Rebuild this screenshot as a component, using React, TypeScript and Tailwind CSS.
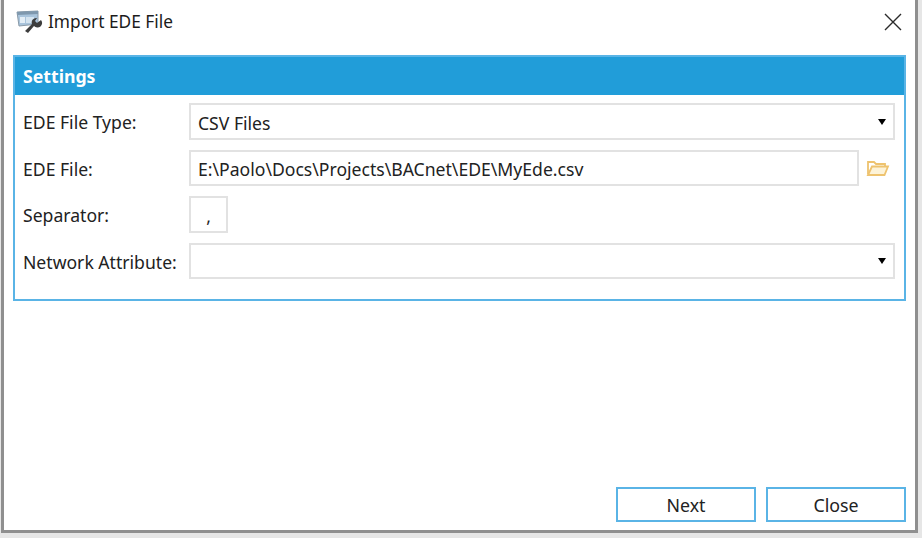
const font = "font-['Noto_Sans','Open_Sans',sans-serif]"

function WindowIcon() {
  return (
    <svg width="28" height="24" viewBox="0 0 28 24" className="shrink-0">
      <path d="M2 2 L23 1 L23 14 L4 16 Z" fill="#a9c4dc" stroke="#8a9aa8" />
      <path d="M2 2 L23 1 L23 4 L2.5 5 Z" fill="#7f98ae" />
      <rect x="5" y="7" width="5" height="6" fill="#e4eef6" />
      <rect x="11" y="7" width="8" height="6" fill="#d5e4f0" />
      <path d="M10 21 L17 14 A4.5 4.5 0 0 1 22 8 L20 11 L22 13 L26 10 A4.5 4.5 0 0 1 19 16 L13 23 Z" fill="#3d3d3d" />
    </svg>
  )
}

function CloseIcon() {
  return (
    <svg width="18" height="18" viewBox="0 0 18 18" className="shrink-0">
      <path d="M1 1 L17 17 M17 1 L1 17" stroke="#2b2b2b" strokeWidth="1.4" fill="none" />
    </svg>
  )
}

function FolderIcon() {
  return (
    <svg width="24" height="18" viewBox="0 0 24 18" className="shrink-0">
      <path d="M2 15 V3 H8 L10 5 H19 V7" fill="none" stroke="#eec36f" strokeWidth="1.8" />
      <path d="M2 16 L6 7.5 H22 L18.5 16 Z" fill="#fdf3d8" stroke="#eec36f" strokeWidth="1.8" />
    </svg>
  )
}

function Caret() {
  return <span className="w-0 h-0 -mt-[3px] border-x-[4px] border-x-transparent border-t-[6px] border-t-black" />
}

function Row({ label, children, className }: { label: string; children: React.ReactNode; className: string }) {
  return (
    <div className={`flex items-center ${className}`}>
      <span className="w-[166px] shrink-0 text-[17.6px] text-[#222] leading-none pt-[3px]">{label}</span>
      {children}
    </div>
  )
}

function Box({ children, className }: { children?: React.ReactNode; className: string }) {
  return (
    <div className={`flex items-center pt-[3px] border-2 border-[#e2e2e2] text-[17.6px] text-[#222] ${className}`}>
      {children}
    </div>
  )
}

export default function App() {
  return (
    <div className={`w-[922px] h-[538px] overflow-hidden bg-[#e6e6e6] ${font}`}>
      <div className="ml-[1px] w-[917px] h-[533px] flex flex-col bg-white border-l-[3px] border-r-[3px] border-b-[3px] border-[#8f8f8f]">
        {/* Title bar */}
        <div className="flex items-center h-[54px] shrink-0 pl-[11px] pr-[13px] pb-[11px]">
          <WindowIcon />
          <span className="ml-[5px] text-[17.3px] text-[#1c1c1c]">Import EDE File</span>
          <div className="ml-auto">
            <CloseIcon />
          </div>
        </div>

        {/* Settings panel */}
        <div className="mt-[1px] ml-[9px] w-[893px] h-[246px] shrink-0 border-2 border-[#5ab4e6] border-t-0">
          <div className="h-[40px] -mx-[2px] flex items-center px-[8px] bg-[#219dd9] border-t-2 border-x-2 border-[#5ab4e6] text-white text-[17.7px] font-bold">
            Settings
          </div>
          <div className="flex flex-col pl-[8px] pt-[8px]">
            <Row label="EDE File Type:" className="h-[37px]">
              <Box className="w-[706px] h-[37px] justify-between pl-[7px] pr-[7px]">
                CSV Files
                <Caret />
              </Box>
            </Row>
            <Row label="EDE File:" className="h-[36px] mt-[10px]">
              <Box className="w-[670px] h-[36px] pl-[7px]">E:\Paolo\Docs\Projects\BACnet\EDE\MyEde.csv</Box>
              <div className="ml-[7px]">
                <FolderIcon />
              </div>
            </Row>
            <Row label="Separator:" className="h-[37px] mt-[10px]">
              <Box className="w-[39px] h-[37px] justify-center">,</Box>
            </Row>
            <Row label="Network Attribute:" className="h-[36px] mt-[10px]">
              <Box className="w-[706px] h-[36px] justify-end pr-[7px]">
                <Caret />
              </Box>
            </Row>
          </div>
        </div>

        {/* Footer */}
        <div className="mt-auto flex justify-end gap-[10px] pr-[9px] pb-[8px]">
          <button className="w-[140px] h-[35px] pt-[2px] border-2 border-[#5ab4e6] text-[17.8px] text-[#222]">Next</button>
          <button className="w-[140px] h-[35px] pt-[2px] border-2 border-[#5ab4e6] text-[17.8px] text-[#222]">Close</button>
        </div>
      </div>
    </div>
  )
}
